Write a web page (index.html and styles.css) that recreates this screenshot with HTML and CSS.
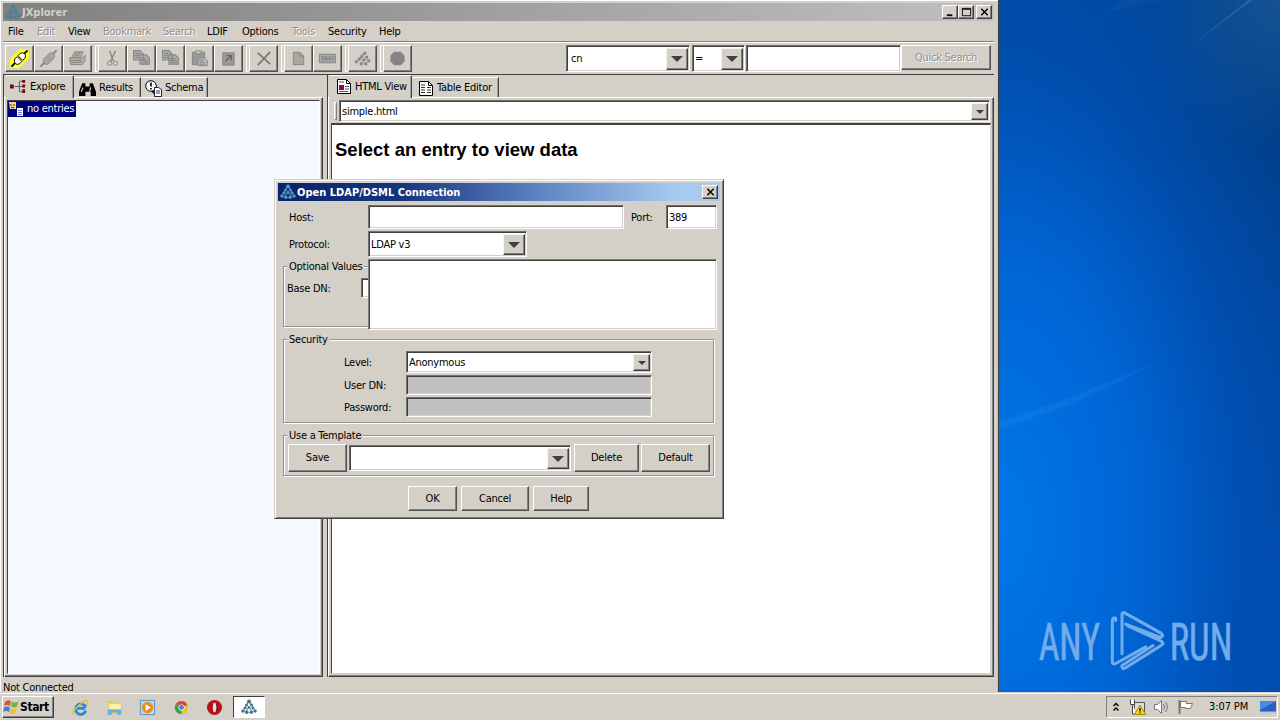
FILE: index.html
```
<!DOCTYPE html>
<html lang="en">
<head>
  <meta charset="UTF-8" />
  <meta name="viewport" content="width=device-width, initial-scale=1" />
  <title>JXplorer</title>
  <link rel="stylesheet" href="styles.css">
</head>
<body>

<!-- Shared icons -->
<svg class="defs" aria-hidden="true">
  <symbol id="jx" viewBox="0 0 16 16">
    <path d="M8 2L3 10M8 2l5 8M8 7l-3 6M8 7l3 6" stroke="currentColor" stroke-width="1" fill="none" />
    <g fill="currentColor">
      <circle cx="8" cy="2.500" r="2" /><circle cx="5.500" cy="6" r="1.500" /><circle cx="10.500" cy="6" r="1.500" />
      <circle cx="4" cy="9" r="1.500" /><circle cx="8" cy="8.500" r="1.300" /><circle cx="12" cy="9" r="1.500" /><circle cx="2" cy="12" r="1.800" />
      <circle cx="5.800" cy="13.200" r="1.800" /><circle cx="10.200" cy="13.200" r="1.800" /><circle cx="14" cy="12" r="1.800" />
    </g>
  </symbol>
  <symbol id="plug" viewBox="0 0 20 20">
    <path d="M1.500 18.500l5-5M13.500 6.500l5-5" stroke="currentColor" stroke-width="2" />
    <path d="M5 10.500l2.500-2.500 5 5-2.500 2.500q-2.500 1.500-4.300 0t-.7-5z" class="plug-body" stroke="currentColor" />
    <path d="M8.500 7l2.500-2.500q2.500-1.200 4.200.3t.8 4.200l-2.500 3z" class="plug-body" stroke="currentColor" />
  </symbol>
  <symbol id="copy" viewBox="0 0 18 16">
    <path d="M1.500 1.500h6l3 3v6h-9zM7.500 5.500h6l3 3v6h-9z" fill="#aaa" stroke="#858585" />
    <path d="M3 4h4M3 6h4M3 8h4M9 9h4M9 11h6M9 13h6" stroke="#858585" />
  </symbol>
</svg>

<div class="desktop">
  <svg class="rays" viewBox="0 0 282 692" aria-hidden="true">
    <path d="M190 48L250 0h5z" fill="#4a8bd0" opacity=".3" />
    <path d="M60 45L110 12 165 0h-40z" fill="#2f75c5" opacity=".12" />
    <path d="M0 423l70-25 90-36-85 42-75 26z" fill="#49a0ff" opacity=".13" />
  </svg>
  <svg class="anyrun" viewBox="200 50 600 200" aria-label="ANY RUN">
    <g class="anyrun-text">
      <text x="205" y="208" textLength="184" lengthAdjust="spacingAndGlyphs">ANY</text>
      <text x="598" y="208" textLength="188" lengthAdjust="spacingAndGlyphs">RUN</text>
    </g>
    <path d="M436 90V83q-10-3-10 7V213q0 10 10 6L526 169M455 190V72q0-8 8-5L572 128q11 8-2 13L466 101M474 107L572 152q12 7 0 13L466 232q-10 6-11-2v-5L548 165" class="anyrun-mark" />
  </svg>
</div>

<div class="window">
  <header class="titlebar titlebar-inactive">
    <svg class="app-icon"><use href="#jx" /></svg>
    <span class="title">JXplorer</span>
    <span class="win-btn"><svg viewBox="0 0 14 12"><path d="M3 9h6" stroke="#000" stroke-width="2" /></svg></span>
    <span class="win-btn"><svg viewBox="0 0 14 12"><path d="M2.500 1.500h9v8h-9zM2 2.500h10" stroke="#000" fill="none" /></svg></span>
    <span class="win-btn win-close"><svg viewBox="0 0 14 12"><path d="M3.500 2l7 7M10.500 2l-7 7" stroke="#000" stroke-width="1.600" /></svg></span>
  </header>

  <nav class="menubar">
    <span>File</span><span class="off">Edit</span><span>View</span><span class="off">Bookmark</span><span class="off">Search</span><span>LDIF</span><span>Options</span><span class="off">Tools</span><span>Security</span><span>Help</span>
  </nav>

  <div class="toolbar">
    <div class="tools">
      <span class="tool connect"><svg viewBox="0 0 20 20"><use href="#plug" /></svg></span>
      <span class="tool"><svg viewBox="0 0 20 20"><use href="#plug" /></svg></span>
      <span class="tool"><svg viewBox="0 0 20 20"><path d="M7 3h9l-3 6H4zM2 9l13 .5 3-3v6l-3 4H3l-1-3z" fill="#b5b2ac" stroke="currentColor" /><path d="M8 5h5M7 7h5M3 12h12M3 14h12" stroke="currentColor" /></svg></span>
    </div>
    <div class="tools">
      <span class="tool"><svg viewBox="0 0 20 20"><path d="M7 2l4 11M13 2L8 13" stroke="currentColor" stroke-width="1.400" /><circle cx="7" cy="15" r="2.300" fill="none" stroke="currentColor" /><circle cx="13" cy="15" r="2.300" fill="none" stroke="currentColor" /></svg></span>
      <span class="tool"><svg viewBox="0 0 18 18"><use href="#copy" width="18" height="16" /></svg></span>
      <span class="tool"><svg viewBox="0 0 18 18"><use href="#copy" width="18" height="16" /></svg></span>
      <span class="tool"><svg viewBox="0 0 20 20"><path d="M2.500 3.500h13v13h-13z" fill="#999" stroke="currentColor" /><path d="M6 2h6v3H6z" fill="#ccc" stroke="currentColor" /><path d="M8.500 9.500h7l3 3v5h-10z" fill="#bbb" stroke="currentColor" /><path d="M10 12h4M10 14h6M10 16h6" stroke="currentColor" /></svg></span>
      <span class="tool"><svg viewBox="0 0 20 20"><path d="M4 4h12v13H4z" fill="#999" stroke="currentColor" /><path d="M7 13l5-5M8 7h5v5" fill="none" stroke="#666" stroke-width="1.500" /></svg></span>
    </div>
    <div class="tools">
      <span class="tool"><svg viewBox="0 0 20 20"><path d="M4 4l13 12M17 3L4 17" stroke="#777" stroke-width="1.800" /></svg></span>
    </div>
    <div class="tools">
      <span class="tool"><svg viewBox="0 0 20 20"><path d="M4.500 3.500h7l4 4v9h-11z" fill="#aaa7a2" stroke="currentColor" /><path d="M11.500 3.500v4h4" fill="none" stroke="currentColor" /></svg></span>
      <span class="tool"><svg viewBox="0 0 20 20"><path d="M1.500 5.500h17v9h-17z" fill="#aaa" stroke="currentColor" /><path d="M3 8h14M3 12.500h14" stroke="#909090" /><path d="M4 10h2M7 10h3M11 10h2M14 10h1M16 10h1" stroke="#777" stroke-width="2" /></svg></span>
    </div>
    <div class="tools">
      <span class="tool"><svg viewBox="0 0 20 20"><path d="M3 14l5-4 4-6M8 10l4 6M12 9l5 4" stroke="#999" /><path d="M11 3h3v3h-3zM8 6h3v3H8zM13 7h3v3h-3zM5 9h3v3H5zM10 10h3v3h-3zM2 12h3v3H2zM7 14h3v3H7zM12 14h3v3h-3zM15 11h3v3h-3z" fill="currentColor" /></svg></span>
    </div>
    <div class="tools">
      <span class="tool"><svg viewBox="0 0 20 20"><path d="M6.500 3h7l4 4v6l-4 4h-7l-4-4V7z" fill="currentColor" /></svg></span>
    </div>
    <div class="search">
      <div class="combo combo-attr"><span>cn</span><i class="arrow"></i></div>
      <div class="combo combo-op"><span>=</span><i class="arrow"></i></div>
      <div class="field field-search"></div>
      <div class="button off">Quick Search</div>
    </div>
  </div>

  <main class="panes">
    <section class="pane pane-left">
      <div class="tabs">
        <div class="tab active tab-explore">
          <svg viewBox="0 0 18 16"><path d="M5 8h5M10 2.500v11M10 2.500h4M10 8h4M10 13.500h4" fill="none" stroke="#555" /><path d="M0 6h4v4H0zM13 1h3v3h-3zM13 6h3v3h-3zM13 11h3v4h-3z" fill="#700818" /></svg>
          Explore
        </div>
        <div class="tab tab-results">
          <svg viewBox="0 0 16 16"><path d="M3 3h3v3h4V3h3l3 8v4h-5v-4H6v4H0v-4z" fill="#000" /><path d="M2 11l2-4M10 11l1-4" stroke="#ddd" /></svg>
          Results
        </div>
        <div class="tab tab-schema">
          <svg viewBox="0 0 17 17"><circle cx="6" cy="6" r="5.300" fill="#fff" stroke="#000" /><path d="M6 2.500v4M6 8v1.500M7 11l3 3" stroke="#000" stroke-width="1.600" /><path d="M9.500 7.500h4l3 2v7h-7z" fill="#fff" stroke="#223" /><path d="M11 11h4M11 13h4" stroke="#335" /></svg>
          Schema
        </div>
      </div>
      <div class="pane-body">
        <div class="tree">
          <div class="node">
            <svg viewBox="0 0 17 16"><path d="M1 1h7v7H2z" fill="#f5d79a" /><path d="M3 3v2M6 3v2M3 6.500h3" stroke="#432" /><path d="M9 7h6v8H9z" fill="#fff" /><path d="M10 9.500h4M10 11.500h4M10 13.500h4" stroke="#6675d0" /></svg>
            <span>no entries</span>
          </div>
        </div>
      </div>
    </section>

    <section class="pane pane-right">
      <div class="tabs">
        <div class="tab active tab-html">
          <svg viewBox="0 0 14 15"><path d="M.5.5h9l4 4v10H.5z" fill="#fff" stroke="#000" /><path d="M9.500.500v4h4" fill="none" stroke="#000" /><path d="M2 3h5M8 7.500h4M8 10h4M2 12.500h9" stroke="#556" /><path d="M2 6h5v5H2z" fill="#a00048" /></svg>
          HTML View
        </div>
        <div class="tab tab-table">
          <svg viewBox="0 0 14 15"><path d="M.5.5h9l4 4v10H.5z" fill="#fff" stroke="#000" /><path d="M9.500.500v4h4" fill="none" stroke="#000" /><path d="M2 4h4M2 6.500h4M2 9h4M2 11.500h4M8 6.500h4M8 9h4M8 11.500h4" stroke="#333" /></svg>
          Table Editor
        </div>
      </div>
      <div class="pane-body">
        <div class="template-row">
          <i class="grip"></i>
          <div class="combo combo-template"><span>simple.html</span><i class="arrow small"></i></div>
        </div>
        <div class="html-view"><h1>Select an entry to view data</h1></div>
      </div>
    </section>
  </main>

  <footer class="status">Not Connected</footer>
</div>

<div class="dialog" role="dialog" aria-label="Open LDAP/DSML Connection">
  <header class="titlebar">
    <svg class="app-icon"><use href="#jx" /></svg>
    <span class="title">Open LDAP/DSML Connection</span>
    <span class="win-btn"><svg viewBox="0 0 14 12"><path d="M3.500 2l7 7M10.500 2l-7 7" stroke="#000" stroke-width="1.600" /></svg></span>
  </header>

  <div class="row row-host">
    <label>Host:</label>
    <div class="field field-host"></div>
    <label class="port">Port:</label>
    <div class="field field-port">389</div>
  </div>
  <div class="row row-protocol">
    <label>Protocol:</label>
    <div class="combo combo-protocol"><span>LDAP v3</span><i class="arrow"></i></div>
  </div>

  <div class="group group-optional">
    <div class="legend"><span>Optional Values</span></div>
    <div class="row row-base"><label>Base DN:</label><div class="field field-base"></div></div>
  </div>

  <div class="group group-security">
    <div class="legend"><span>Security</span></div>
    <div class="row row-level"><label>Level:</label><div class="combo"><span>Anonymous</span><i class="arrow small"></i></div></div>
    <div class="row row-user"><label>User DN:</label><div class="field disabled"></div></div>
    <div class="row row-user"><label>Password:</label><div class="field disabled"></div></div>
  </div>

  <div class="group group-template">
    <div class="legend"><span>Use a Template</span></div>
    <div class="row row-template">
      <div class="button save">Save</div>
      <div class="combo combo-saved"><span></span><i class="arrow"></i></div>
      <div class="button delete">Delete</div>
      <div class="button default">Default</div>
    </div>
  </div>

  <div class="actions">
    <div class="button ok">OK</div>
    <div class="button cancel">Cancel</div>
    <div class="button help">Help</div>
  </div>

  <!-- open protocol list, lies over the optional values -->
  <div class="popup"></div>
</div>

<div class="taskbar">
  <div class="start">
    <svg viewBox="0 0 16 16"><path d="M2 3q3-3 6-1L7 7Q4 5 1 7z" fill="#e0562c" /><path d="M9 2.500q3 2 6 0L14 7.500q-3 2-6 0z" fill="#6fb33c" /><path d="M1 8.500q3-2 6 0L6 13q-3-2-6 0z" fill="#3a80d8" /><path d="M8 9q3 2 6 0l-1.500 5q-3 2-6 0z" fill="#f5bd2a" /></svg>
    Start
  </div>
  <svg class="task" viewBox="0 0 18 18"><path d="M4 10h10M14.500 12.500A5.500 5.500 0 1 1 14.500 9" fill="none" stroke="#2489d8" stroke-width="3" /><path d="M2 16Q-1 14 7 7T16 2q2 2-1 5" fill="none" stroke="#e8bb38" stroke-width="1.600" /></svg>
  <svg class="task" viewBox="0 0 18 18"><path d="M2 2h5l1 2h9v11H2z" fill="#e9c05a" /><path d="M3 5h13v6H3z" fill="#fff0a8" /><path d="M2 17v-6h14v6h-4v-3H6v3z" fill="#62b3df" /></svg>
  <svg class="task" viewBox="0 0 18 18"><path d="M1.500 1.500h15v15h-15z" fill="#b9dcf2" stroke="#4b91cc" /><circle cx="9" cy="9" r="6" fill="#f58a13" /><path d="M7 5.500v7l5.500-3.500z" fill="#fff" /></svg>
  <svg class="task" viewBox="0 0 18 18"><circle cx="9" cy="9" r="7" fill="#e8c52a" /><path d="M9 9L3 5.400A7 7 0 0 1 15.200 6z" fill="#dc4435" /><path d="M9 9L3 5.400A7 7 0 0 0 9 16z" fill="#36a055" /><circle cx="9" cy="9" r="3.300" fill="#fff" /><circle cx="9" cy="9" r="2.600" fill="#4784dc" /></svg>
  <svg class="task" viewBox="0 0 18 18"><circle cx="9" cy="9" r="8" fill="#b81218" /><ellipse cx="9" cy="9" rx="2.500" ry="5.500" fill="#e8dada" stroke="#7b080c" /></svg>
  <div class="task-active"><svg><use href="#jx" /></svg></div>

  <div class="tray">
    <svg class="t-up" viewBox="0 0 8 10"><path d="M1.500 4L4 1.500 6.500 4M1.500 8.500L4 6l2.500 2.500" fill="none" stroke="#000" stroke-width="1.400" /></svg>
    <svg class="t-net" viewBox="0 0 17 16"><path d="M5.500 3.500h10v9h-10z" fill="#ddd" stroke="#555" /><path d="M1.500.500v5h4v-5M3.500 5v10h4" fill="#fff" stroke="#444" /><path d="M11 6l5.500 9.500h-11z" fill="#f6d51e" stroke="#a98b00" /><path d="M11 9v3.500M11 13.500v1" stroke="#000" stroke-width="1.300" /></svg>
    <svg class="t-vol" viewBox="0 0 17 16"><path d="M1.500 5.500h3l4-4v13l-4-4h-3z" fill="#fff" stroke="#777" /><path d="M10.500 5q2 3 0 6M12.500 3q3.500 5 0 10" fill="none" stroke="#777" /></svg>
    <svg class="t-flag" viewBox="0 0 17 16"><path d="M2.500 1v14" stroke="#777" stroke-width="2" /><path d="M3.500 2.500h6v2h6l-2 5h-5v-1h-5z" fill="#fff" stroke="#777" /></svg>
    <span class="clock">3:07 PM</span>
    <svg class="t-show" viewBox="0 0 16 13"><path d="M0 0h16v11H0z" fill="#2a5dc0" /><path d="M0 0h16L0 9z" fill="#4c8ae0" /><path d="M0 11.500h16" stroke="#b8c8e4" stroke-width="2" /></svg>
  </div>
</div>

</body>
</html>
```
FILE: styles.css
```
/* Reset */
* {
  margin: 0;
  padding: 0;
  box-sizing: border-box;
}
body {
  width: 1280px;
  height: 720px;
  overflow: hidden;
  position: relative;
  font-family: 'DejaVu Sans Condensed', 'DejaVu Sans', sans-serif;
  font-stretch: condensed;
  font-size: 11px;
  letter-spacing: -0.25px;
  line-height: 14px;
  color: #000;
  background: #d4d0c8;
  white-space: nowrap;
}
svg {
  display: block;
  flex: none;
}
.defs {
  position: absolute;
  width: 0;
  height: 0;
}

/* Desktop */
.desktop {
  position: absolute;
  left: 998px;
  top: 0;
  width: 282px;
  height: 692px;
  background:
    radial-gradient(ellipse 130px 150px at 100% 0, rgba(40, 95, 140, 0.5), transparent),
    radial-gradient(ellipse 350px 680px at 0 76%, #0078e8 0%, #0066d6 38%, rgba(0, 82, 184, 0.7) 70%, transparent 100%),
    linear-gradient(180deg, #004596 0%, #003f88 22%, #00479f 60%, #004cac 100%);
}
.rays {
  width: 282px;
  height: 692px;
}
.anyrun {
  position: absolute;
  left: 39px;
  top: 607px;
  width: 200px;
  height: 67px;
  overflow: visible;
}
.anyrun-text {
  font-family: Roboto, sans-serif;
  font-size: 155px;
  letter-spacing: 0;
  fill: #72aceb;
  stroke: #72aceb;
  stroke-width: 2;
}
.anyrun-mark {
  fill: none;
  stroke: #72aceb;
  stroke-width: 9;
  stroke-linejoin: round;
  stroke-linecap: round;
}

/* Main window */
.window {
  position: absolute;
  left: 0;
  top: 0;
  width: 999px;
  height: 692px;
  padding: 3px 4px 0 3px;
  background: #d4d0c8;
  border-right: 1px solid #404040;
  box-shadow: inset 0 1px #fff, inset 1px 0 #fff, inset -1px 0 #c9c5bd;
  display: flex;
  flex-direction: column;
}
.titlebar {
  flex: none;
  height: 18px;
  display: flex;
  align-items: center;
  padding: 0 2px;
  color: #fff;
  background: linear-gradient(90deg, #0a246a 0%, #16357f 28%, #5f86c4 60%, #a6caf0 90%);
}
.titlebar-inactive {
  color: #d4d0c8;
  background: linear-gradient(90deg, #808080, #c0c0c0);
}
.titlebar .title {
  flex: 1;
  padding-top: 1px;
  font-weight: bold;
  letter-spacing: 0;
}
.app-icon {
  width: 16px;
  height: 16px;
  margin-right: 1px;
  color: #5796c8;
}
.titlebar-inactive .app-icon {
  color: #46809c;
}
.win-btn {
  width: 16px;
  height: 14px;
  padding: 1px;
  background: #d4d0c8;
  border: 1px solid;
  border-color: #fff #404040 #404040 #fff;
  box-shadow: inset -1px -1px #808080;
}
.win-btn svg {
  width: 13px;
  height: 11px;
}
.win-close {
  margin-left: 2px;
}
.menubar {
  flex: none;
  height: 21px;
  padding: 4px 0 0 5px;
  border-bottom: 1px solid #808080;
  display: grid;
  grid-template-columns: 29px 31px 35px 60px 44px 35px 50px 36px 51px 40px;
}
.off {
  color: #909090;
  text-shadow: 1px 1px #fff;
}

/* Controls */
.button {
  display: flex;
  align-items: center;
  justify-content: center;
  border: 1px solid;
  border-color: #fff #505050 #505050 #fff;
  box-shadow: inset -1px -1px #808080;
}
.field {
  padding: 5px 2px;
  background: #fff;
  border: 1px solid;
  border-color: #707070 #fff #fff #707070;
  box-shadow: inset 1px 1px #404040, inset -1px -1px #d4d0c8;
}
.field.disabled {
  background: #c0c0c0;
}
.combo {
  display: flex;
  align-items: center;
  padding: 2px 1px 1px 2px;
  background: #fff;
  border: 1px solid;
  border-color: #707070 #fff #fff #707070;
  box-shadow: inset 1px 1px #404040, inset -1px -1px #d4d0c8;
}
.combo span {
  flex: 1;
}
.arrow {
  width: 22px;
  align-self: stretch;
  display: flex;
  align-items: center;
  justify-content: center;
  background: #d4d0c8;
  border: 1px solid;
  border-color: #f4f2ee #404040 #404040 #f4f2ee;
  box-shadow: inset -1px -1px #808080;
}
.arrow::after {
  content: '';
  border: 6px solid transparent;
  border-top-color: #404040;
  border-bottom: 0;
}
.arrow.small {
  width: 17px;
}
.arrow.small::after {
  border-width: 4px 4px 0;
}

/* Toolbar */
.toolbar {
  flex: none;
  height: 33px;
  padding: 2px 3px 0 2px;
  border-top: 1px solid #fff;
  border-bottom: 1px solid #404040;
  display: flex;
  gap: 6px;
}
.tools {
  display: flex;
  position: relative;
  height: 27px;
}
.tools + .tools {
  box-shadow: -3px 0 0 -1px #d4d0c8, -3px 0 0 0 #fff;
}
.tool {
  --plug-fill: #aaa7a2;
  width: 29px;
  height: 27px;
  display: flex;
  align-items: center;
  justify-content: center;
  color: #858585;
  background: #d4d0c8;
  border: 1px solid;
  border-color: #fff #505050 #505050 #fff;
  box-shadow: inset -1px -1px #808080;
}
.tool svg {
  width: 19px;
  height: 19px;
}
.plug-body {
  fill: var(--plug-fill);
}
.connect {
  --plug-fill: #fff;
  color: #000;
}
.connect svg {
  background: linear-gradient(135deg, transparent 22%, #ffff20 30%, #ffff20 70%, transparent 78%);
}
.search {
  flex: 1;
  display: flex;
  justify-content: flex-end;
  height: 27px;
}
.combo-attr {
  width: 124px;
  margin-right: 2px;
}
.combo-attr span {
  padding-left: 2px;
}
.combo-op {
  width: 53px;
  margin-right: 1px;
}
.field-search {
  width: 155px;
}
.search .button {
  width: 90px;
  height: 25px;
}

/* Tabbed panes */
.panes {
  flex: none;
  height: 602px;
  display: flex;
  gap: 4px;
}
.pane {
  display: flex;
  flex-direction: column;
}
.pane-left {
  width: 320px;
  border-left: 1px solid #404040;
}
.pane-right {
  width: 667px;
  border-left: 1px solid #404040;
}
.tabs {
  height: 22px;
  display: flex;
  align-items: flex-end;
  padding-left: 2px;
}
.tab {
  height: 20px;
  display: flex;
  align-items: center;
  padding-top: 1px;
  border-top: 1px solid #fff;
  border-right: 1px solid #404040;
  box-shadow: inset -1px 0 #a0a0a0;
}
.tab.active {
  height: 23px;
  padding-top: 0;
  padding-bottom: 1px;
  position: relative;
  margin-bottom: -1px;
  background: #d4d0c8;
}
.tab svg {
  width: 17px;
  height: 17px;
  margin-right: 3px;
}
.tab-explore {
  width: 68px;
  padding-left: 4px;
}
.tab-results {
  width: 67px;
  padding-left: 5px;
}
.tab-schema {
  width: 67px;
  padding-left: 4px;
}
.tab-html {
  width: 82px;
  padding-left: 7px;
}
.tab-table {
  width: 87px;
  padding-left: 7px;
}
.pane-right .tab svg {
  width: 14px;
  height: 15px;
  margin-right: 4px;
}
.pane-body {
  flex: 1;
  padding: 2px;
  border: 1px solid;
  border-color: #fff #404040 #404040 #fff;
  box-shadow: inset -1px -1px #808080;
  display: flex;
  flex-direction: column;
}
.tree {
  flex: 1;
  background: #f5f8ff;
  border: 1px solid;
  border-color: #404040 #fff #fff #404040;
}
.node {
  display: flex;
  align-items: center;
  width: 68px;
  height: 16px;
  color: #fff;
  background: #000080;
}
.node svg {
  width: 17px;
  height: 16px;
  margin-right: 2px;
}
.template-row {
  flex: none;
  height: 23px;
  display: flex;
  padding: 0 1px 0 3px;
}
.grip {
  width: 3px;
  height: 18px;
  margin: 2px 2px 0 0;
  border: 1px solid;
  border-color: #fff #808080 #808080 #fff;
}
.combo-template {
  flex: 1;
  height: 22px;
}
.html-view {
  flex: 1;
  padding: 13px 3px;
  background: #fff;
  border: 1px solid #d4d0c8;
  border-top: 2px solid #404040;
  border-left-color: #404040;
}
.html-view h1 {
  font: bold 18.5px/24px 'Liberation Sans', sans-serif;
  letter-spacing: 0;
}
.status {
  padding-top: 4px;
}

/* Connection dialog */
.dialog {
  position: absolute;
  left: 274px;
  top: 179px;
  width: 450px;
  height: 340px;
  padding: 3px;
  background: #d4d0c8;
  border: 1px solid;
  border-color: #d4d0c8 #404040 #404040 #d4d0c8;
  box-shadow: inset 1px 1px #fff, inset -1px -1px #808080;
}
.row {
  display: flex;
  align-items: center;
}
.row-host {
  height: 24px;
  margin-top: 4px;
  padding-left: 11px;
}
.row-host .field {
  height: 24px;
}
.row label {
  padding-top: 1px;
}
.row-host label,
.row-protocol label {
  width: 79px;
}
.row-host .port {
  width: 42px;
  padding-left: 7px;
}
.field-host {
  width: 256px;
}
.field-port {
  width: 51px;
}
.row-protocol {
  height: 26px;
  margin-top: 2px;
  padding-left: 11px;
}
.combo-protocol {
  width: 159px;
  height: 26px;
}
.group {
  width: 431px;
  margin: 12px 0 0 5px;
  border: 1px solid #909090;
  box-shadow: 1px 1px #fff, inset 1px 1px #fff;
}
.legend {
  height: 15px;
  margin: -8px 0 0 3px;
}
.legend span {
  display: inline-block;
  padding: 1px 2px 0;
  background: #d4d0c8;
}
.group-optional {
  height: 61px;
  margin-top: 9px;
}
.row-base {
  height: 20px;
  margin-top: 4px;
  padding-left: 3px;
}
.row-base label {
  width: 74px;
}
.field-base {
  width: 345px;
  height: 20px;
}
.group-security {
  height: 84px;
}
.row-level,
.row-user {
  padding-left: 60px;
}
.row-level {
  height: 22px;
  margin-top: 4px;
}
.row-user {
  height: 20px;
  margin-top: 2px;
}
.group-security label {
  width: 62px;
}
.group-security .combo,
.group-security .field {
  width: 246px;
  align-self: stretch;
}
.group-template {
  height: 41px;
}
.row-template {
  margin-top: 1px;
  padding-left: 4px;
}
.row-template .button {
  height: 28px;
}
.save {
  width: 59px;
}
.combo-saved {
  width: 222px;
  height: 26px;
  margin: 0 3px 0 2px;
}
.delete {
  width: 65px;
}
.default {
  width: 69px;
  margin-left: 2px;
}
.actions {
  display: flex;
  gap: 4px;
  margin: 10px 0 0 130px;
}
.actions .button {
  height: 25px;
}
.ok {
  width: 49px;
}
.cancel {
  width: 68px;
}
.help {
  width: 56px;
}
.popup {
  position: absolute;
  left: 93px;
  top: 79px;
  width: 349px;
  height: 71px;
  background: #fff;
  border: 1px solid;
  border-color: #808080 #fff #fff #808080;
  box-shadow: inset 1px 1px #404040, inset -1px -1px #d4d0c8;
}

/* Taskbar */
.taskbar {
  position: absolute;
  left: 0;
  top: 692px;
  width: 1280px;
  height: 28px;
  padding: 3px 2px 0 2px;
  display: flex;
  align-items: flex-start;
  background: #d4d0c8;
  border-top: 1px solid #d4d0c8;
  box-shadow: inset 0 1px #fff;
}
.start {
  width: 52px;
  height: 22px;
  margin-right: 18px;
  display: flex;
  align-items: center;
  gap: 1px;
  font-weight: bold;
  font-size: 12px;
  letter-spacing: -0.4px;
  border: 1px solid;
  border-color: #fff #404040 #404040 #fff;
  box-shadow: inset -1px -1px #808080;
}
.start svg {
  width: 16px;
  height: 16px;
}
.task {
  width: 17px;
  height: 17px;
  margin: 3px 16.5px 0 0;
}
.task-active {
  width: 32px;
  height: 22px;
  margin-left: -7px;
  display: flex;
  justify-content: center;
  align-items: center;
  color: #47758f;
  background: #fff;
  border: 1px solid;
  border-color: #404040 #fff #fff #404040;
}
.task-active svg {
  width: 16px;
  height: 16px;
}
.tray {
  width: 172px;
  height: 22px;
  margin-left: auto;
  padding-left: 5px;
  display: flex;
  align-items: center;
  border: 1px solid;
  border-color: #808080 #fff #fff #808080;
}
.t-up {
  width: 8px;
  height: 10px;
  margin-right: 9px;
}
.t-net,
.t-vol,
.t-flag {
  width: 17px;
  height: 16px;
  margin-right: 7px;
}
.clock {
  width: 59px;
  padding-left: 8px;
  letter-spacing: -0.1px;
}
.t-show {
  width: 16px;
  height: 13px;
}
```
